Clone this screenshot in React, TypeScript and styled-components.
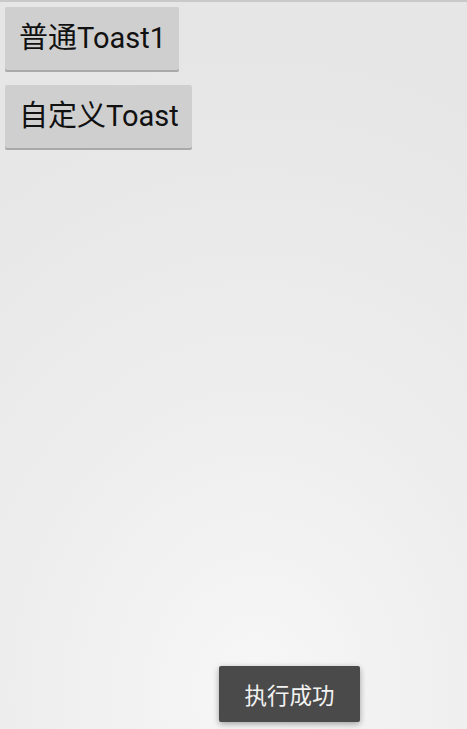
import React from 'react';
import styled, { createGlobalStyle } from 'styled-components';

const GlobalStyle = createGlobalStyle`
  html, body {
    margin: 0;
    padding: 0;
    height: 100%;
  }
  #root {
    height: 100%;
  }
`;

const Screen = styled.div`
  position: relative;
  width: 467px;
  height: 729px;
  overflow: hidden;
  box-sizing: border-box;
  border-top: 2px solid #c9c9c9;
  background: radial-gradient(
    ellipse 520px 640px at 55% 95%,
    #f7f7f7 0%,
    #eeeeee 45%,
    #e6e6e6 100%
  );
  font-family: Roboto, 'Noto Sans CJK SC', sans-serif;
`;

const ButtonColumn = styled.div`
  display: flex;
  flex-direction: column;
  align-items: flex-start;
  gap: 15px;
  padding: 5px 0 0 5px;
`;

const Button = styled.button`
  height: 63px;
  padding: 0 13px 0 14px;
  border: none;
  border-radius: 2px;
  background: #cfcfcf;
  box-shadow: 0 2px 0 #a9a9a9;
  color: #111;
  font-family: Roboto, 'Noto Sans CJK SC', sans-serif;
  font-size: 29px;
  line-height: 1;
  cursor: pointer;
`;

const Toast = styled.div`
  position: absolute;
  left: 219px;
  top: 664px;
  width: 141px;
  height: 56px;
  display: flex;
  align-items: center;
  justify-content: center;
  border-radius: 2px;
  background: #4a4a4a;
  box-shadow: 0 2px 6px rgba(0, 0, 0, 0.35);
  color: #f2f2f2;
  font-family: 'Noto Sans CJK SC', sans-serif;
  font-size: 22.5px;
`;

export default function App() {
  return (
    <>
      <GlobalStyle />
      <Screen>
        <ButtonColumn>
          <Button>普通Toast1</Button>
          <Button>自定义Toast</Button>
        </ButtonColumn>
        <Toast>执行成功</Toast>
      </Screen>
    </>
  );
}
